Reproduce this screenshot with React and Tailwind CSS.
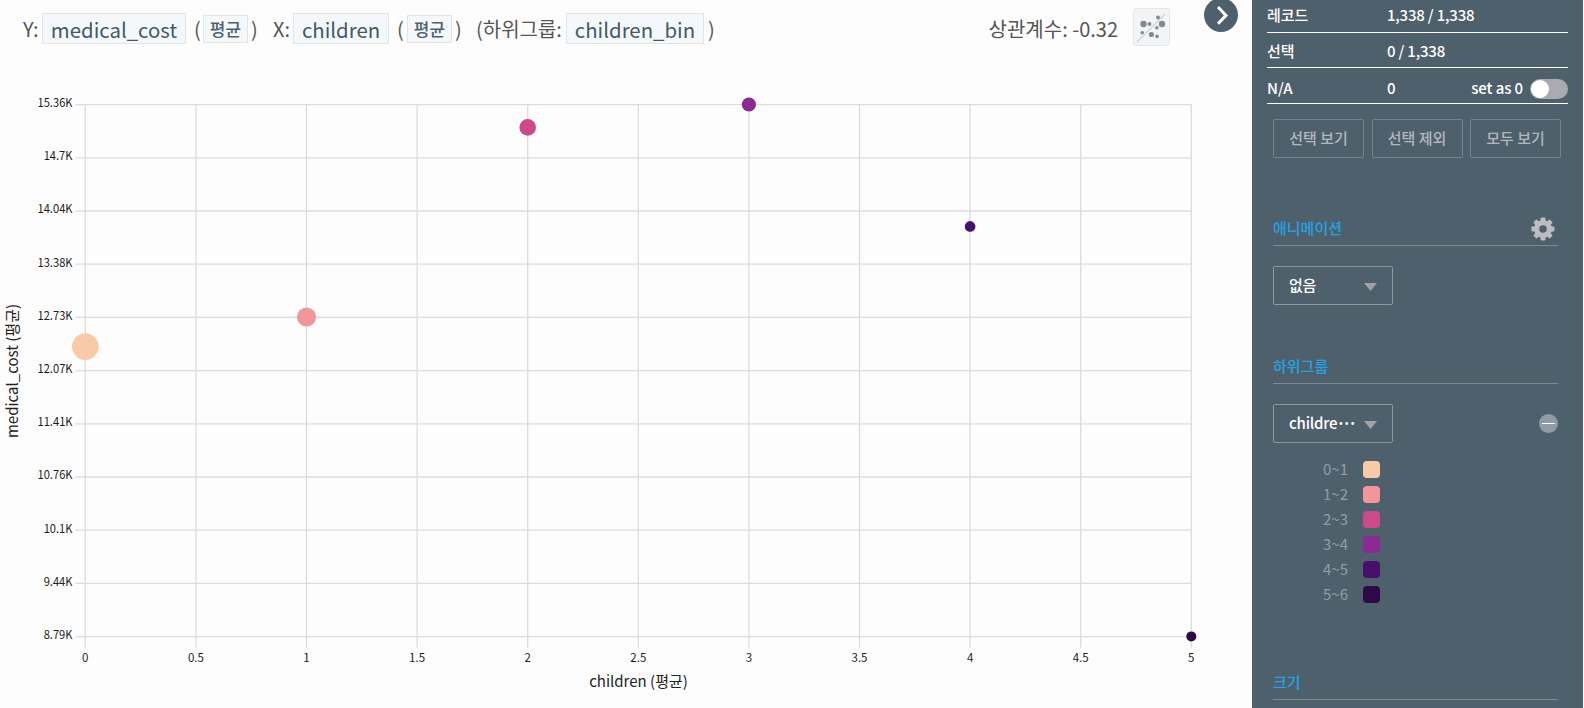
// Plot area inside the chart svg
const PLOT = { left: 85.3, right: 1191.3, top: 104.6, bottom: 636.6 }

const Y_TICKS = ['15.36K', '14.7K', '14.04K', '13.38K', '12.73K', '12.07K', '11.41K', '10.76K', '10.1K', '9.44K', '8.79K']
const X_TICKS = ['0', '0.5', '1', '1.5', '2', '2.5', '3', '3.5', '4', '4.5', '5']

const POINTS = [
  { x: 0, cy: 346.6, r: 13.3, color: '#f9caa7' },
  { x: 1, cy: 317, r: 9.6, color: '#f1979a' },
  { x: 2, cy: 127.4, r: 8.3, color: '#cb4b89' },
  { x: 3, cy: 104.5, r: 7.1, color: '#8b2a92' },
  { x: 4, cy: 226.4, r: 5.3, color: '#47106b' },
  { x: 5, cy: 636.4, r: 5, color: '#2d0a45' }
]

const LEGEND = [
  { label: '0~1', color: 'bg-[#f9caa7]' },
  { label: '1~2', color: 'bg-[#f1979a]' },
  { label: '2~3', color: 'bg-[#cb4b89]' },
  { label: '3~4', color: 'bg-[#8b2a92]' },
  { label: '4~5', color: 'bg-[#47106b]' },
  { label: '5~6', color: 'bg-[#2d0a45]' }
]

const GEAR_TEETH = [0, 45, 90, 135]

function FieldTag({ children, className }) {
  return (
    <span
      className={`flex h-[31px] items-center justify-center border border-[#dfe6ea] bg-[#f4f8fb] pt-px text-[20.4px] text-[#465865] ${className}`}
    >
      {children}
    </span>
  )
}

function AggregateTag() {
  return (
    <span className="flex h-7 w-[45px] items-center justify-center border border-[#dfe6ea] bg-[#f4f8fb] pt-px text-[17px] font-medium text-[#50616e]">
      평균
    </span>
  )
}

function GearIcon() {
  return (
    <svg viewBox="0 0 24 24" className="mr-[3px] size-6">
      <g fill="#bcbdc1">
        {GEAR_TEETH.map((angle) => (
          <rect key={angle} x="9.6" y="0.5" width="4.8" height="23" rx="1" transform={`rotate(${angle} 12 12)`} />
        ))}
        <circle cx="12" cy="12" r="9" />
      </g>
      <circle cx="12" cy="12" r="3.8" fill="#4f606d" />
    </svg>
  )
}

function ChartHeader() {
  return (
    <div className="flex h-[57px] items-center pl-[23px] text-[20px] whitespace-nowrap text-[#555]">
      <span className="w-[19px]">Y:</span>
      <FieldTag className="w-36">medical_cost</FieldTag>
      <span className="w-[17px] pl-2">(</span>
      <AggregateTag />
      <span className="w-[25px] pl-[3px]">)</span>
      <span className="w-5">X:</span>
      <FieldTag className="w-24">children</FieldTag>
      <span className="w-[18px] pl-2">(</span>
      <AggregateTag />
      <span className="w-6 pl-[3px]">)</span>
      <span className="w-[90px]">(하위그룹:</span>
      <FieldTag className="w-[138px]">children_bin</FieldTag>
      <span className="pl-1">)</span>

      <span className="ml-auto">상관계수: -0.32</span>
      <button className="mt-2 mr-[34px] ml-[15px] flex h-[38px] w-[37px] items-center justify-center self-start rounded-[3px] border border-[#e6e8ea] bg-[#f3f4f6]">
        <svg viewBox="0 0 37 38" className="h-[38px] w-[37px] shrink-0">
          <line x1="4" y1="34" x2="32" y2="6" stroke="#d3d4d6" strokeWidth="1.5" />
          <g fill="#88898b">
            <circle cx="10.5" cy="16" r="3.2" />
            <circle cx="16.5" cy="16" r="1.9" />
            <circle cx="25" cy="9.5" r="1.9" />
            <circle cx="29" cy="16" r="3.2" />
            <circle cx="23.8" cy="19.7" r="1.8" />
            <circle cx="9.2" cy="24.7" r="1.8" />
            <circle cx="18.4" cy="26.5" r="2.6" />
            <circle cx="24" cy="28.4" r="1.8" />
          </g>
        </svg>
      </button>
      <button className="mt-[-2px] mr-3.5 flex size-[34px] items-center justify-center self-start rounded-full bg-[#4f606d]">
        <svg viewBox="0 0 34 34" className="size-[34px]" fill="none" stroke="#fff" strokeWidth="3">
          <path d="M14 9 L22 17.4 L14 25.8" />
        </svg>
      </button>
    </div>
  )
}

function ScatterChart() {
  const stepX = (PLOT.right - PLOT.left) / 10
  const stepY = (PLOT.bottom - PLOT.top) / 10

  return (
    <svg viewBox="0 57 1252 651" className="h-[651px] w-[1252px]">
      {/* Grid */}
      <g stroke="#dcdcdc" strokeWidth="1.3">
        {Y_TICKS.map((label, i) => (
          <line key={label} x1={PLOT.left - 10} x2={PLOT.right} y1={PLOT.top + i * stepY} y2={PLOT.top + i * stepY} />
        ))}
        {X_TICKS.map((label, i) => (
          <line key={label} x1={PLOT.left + i * stepX} x2={PLOT.left + i * stepX} y1={PLOT.top} y2={PLOT.bottom + 11} />
        ))}
      </g>

      {/* Tick labels */}
      <g fill="#1c1c1c">
        {Y_TICKS.map((label, i) => (
          <text
            key={label}
            x="72.5"
            y={PLOT.top + i * stepY + 2.3}
            textAnchor="end"
            textLength={label.length === 6 ? 35 : 28.8}
            lengthAdjust="spacingAndGlyphs"
            className="text-[12px]"
          >
            {label}
          </text>
        ))}
        {X_TICKS.map((label, i) => (
          <text key={label} x={PLOT.left + i * stepX} y="662" textAnchor="middle" className="text-[11.5px]">
            {label}
          </text>
        ))}
      </g>

      {/* Axis titles */}
      <g className="text-[15px]" fill="#222">
        <text x="638.5" y="687" textAnchor="middle">
          children (평균)
        </text>
        <text transform="translate(18 371) rotate(-90)" textAnchor="middle">
          medical_cost (평균)
        </text>
      </g>

      {POINTS.map((p) => (
        <circle key={p.x} cx={PLOT.left + p.x * 2 * stepX} cy={p.cy} r={p.r} fill={p.color} />
      ))}
    </svg>
  )
}

function SelectBox({ label, truncated }) {
  return (
    <button className="flex h-[39px] w-[120px] items-center justify-between rounded-[2px] border border-[#8c98a2] pr-[15px] pl-[15px] text-[15px] font-medium text-white">
      <span className="tracking-[-0.2px]">
        {label}
        {truncated && <span className="-ml-px font-bold tracking-[-3px]">···</span>}
      </span>
      <svg viewBox="0 0 13 8" className="mt-0.5 h-2 w-[13px] shrink-0" fill="#a0a2a8">
        <path d="M0 0 H13 L6.5 8 Z" />
      </svg>
    </button>
  )
}

function SectionTitle({ children, icon }) {
  return (
    <div className="flex h-[34px] w-[285px] items-center justify-between border-b border-[#7c8993] text-[15px] font-medium text-[#24a3e3]">
      <span>{children}</span>
      {icon}
    </div>
  )
}

function Sidebar() {
  return (
    <aside className="h-[708px] w-[331px] overflow-hidden bg-[#4f606d] text-[15px] font-medium text-white">
      {/* Record counts */}
      <div className="mr-[15px] ml-[15px]">
        <div className="flex h-[33px] items-center border-b border-white pb-px">
          <span className="w-[120px]">레코드</span>
          <span className="tracking-[-0.2px]">1,338 / 1,338</span>
        </div>
        <div className="flex h-[35px] items-center border-b border-white pt-0.5">
          <span className="w-[120px]">선택</span>
          <span className="tracking-[-0.2px]">0 / 1,338</span>
        </div>
        <div className="flex h-9 items-center border-b border-white pt-[5px]">
          <span className="w-[120px]">N/A</span>
          <span>0</span>
          <span className="mr-[7px] ml-auto tracking-[-0.1px]">set as 0</span>
          <span className="mt-px flex h-5 w-[38px] items-center rounded-full bg-[#a9abb0] pl-px">
            <span className="size-[18px] rounded-full bg-white" />
          </span>
        </div>
      </div>

      <div className="pl-[21px]">
        <div className="mt-[15px] flex w-[288px] justify-between text-[#b0b8be]">
          <button className="h-[39px] w-[91px] rounded-[2px] border border-[#74828d]">선택 보기</button>
          <button className="h-[39px] w-[91px] rounded-[2px] border border-[#74828d]">선택 제외</button>
          <button className="h-[39px] w-[91px] rounded-[2px] border border-[#74828d]">모두 보기</button>
        </div>

        <div className="mt-[54px]">
          <SectionTitle icon={<GearIcon />}>애니메이션</SectionTitle>
          <div className="mt-5">
            <SelectBox label="없음" />
          </div>
        </div>

        <div className="mt-[45px]">
          <SectionTitle>하위그룹</SectionTitle>
          <div className="mt-5 flex w-[285px] items-center justify-between">
            <SelectBox label="childre" truncated />
            <span className="flex size-[19px] items-center justify-center rounded-full bg-[#8f9ba6]">
              <span className="h-px w-[13px] bg-white" />
            </span>
          </div>
          <div className="mt-[18px] flex flex-col gap-2">
            {LEGEND.map((item) => (
              <div key={item.label} className="flex h-[17px] items-center">
                <span className="w-[75px] text-right font-normal text-[#929da6]">{item.label}</span>
                <span className={`ml-[15px] size-[17px] rounded-[4px] ${item.color}`} />
              </div>
            ))}
          </div>
        </div>

        <div className="mt-[63px]">
          <SectionTitle>크기</SectionTitle>
        </div>
      </div>
    </aside>
  )
}

export default function App() {
  return (
    <div className="flex h-[708px] w-[1584px] overflow-hidden bg-[#fdfdfd] font-['Noto_Sans_CJK_KR',sans-serif]">
      <main className="w-[1252px]">
        <ChartHeader />
        <ScatterChart />
      </main>
      <Sidebar />
    </div>
  )
}
